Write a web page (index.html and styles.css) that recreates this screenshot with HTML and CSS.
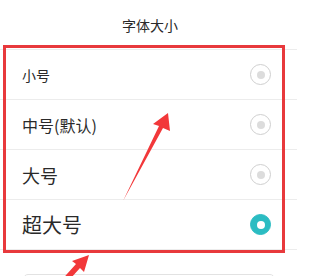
FILE: index.html
```html
<!DOCTYPE html>
<html lang="zh">
<head>
<meta charset="utf-8">
<link rel="stylesheet" href="styles.css">
</head>
<body>
<div class="page">
  <div class="header">字体大小</div>
  <div class="list">
    <div class="row"><span class="label s1">小号</span><span class="radio"></span></div>
    <div class="row"><span class="label s2">中号(默认)</span><span class="radio"></span></div>
    <div class="row"><span class="label s3">大号</span><span class="radio"></span></div>
    <div class="row"><span class="label s4">超大号</span><span class="radio on"></span></div>
  </div>
  <div class="next-card"></div>
  <div class="highlight"></div>
  <svg class="arrows" width="297" height="276" viewBox="0 0 297 276">
    <polygon points="123,201 159,126 153,124 168,113 170,131 163,128" fill="#f2383a"/>
    <polygon points="58,284 76,264 72,261 89,255 84,272 80,268 62,288" fill="#f2383a"/>
  </svg>
</div>
</body>
</html>
```
FILE: styles.css
```css
html, body {
  margin: 0;
  padding: 0;
  background: #ffffff;
}
.page {
  position: relative;
  width: 297px;
  height: 276px;
  overflow: hidden;
  font-family: "Noto Sans CJK SC", "Noto Sans", sans-serif;
  color: #2a2a2a;
}
.header {
  height: 49px;
  display: flex;
  align-items: center;
  justify-content: center;
  font-size: 14px;
  border-bottom: 1px solid #ececec;
  box-sizing: content-box;
  padding-left: 3px;
}
.list {
  display: flex;
  flex-direction: column;
}
.row {
  height: 49px;
  border-bottom: 1px solid #ececec;
  display: flex;
  align-items: center;
  justify-content: space-between;
  padding: 0 26px 0 22px;
}
.label { line-height: 1; }
.s1 { font-size: 14px; }
.s2 { font-size: 16px; }
.s3 { font-size: 18px; }
.s4 { font-size: 20px; }
.radio {
  width: 19px;
  height: 19px;
  border: 1px solid #cfcfcf;
  border-radius: 50%;
  display: flex;
  align-items: center;
  justify-content: center;
  box-sizing: content-box;
}
.radio::after {
  content: "";
  width: 8px;
  height: 8px;
  border-radius: 50%;
  background: #dcdcdc;
}
.radio.on {
  border-color: #2bbcc2;
  background: #2bbcc2;
}
.radio.on::after {
  background: #ffffff;
}
.next-card {
  margin: 24px 22px 0 23px;
  height: 30px;
  border: 1px solid #e2e2e2;
  border-radius: 5px;
}
.highlight {
  position: absolute;
  left: 3px;
  top: 45px;
  width: 276px;
  height: 202px;
  border: 3px solid #e8393c;
}
.arrows {
  position: absolute;
  left: 0;
  top: 0;
}
```
